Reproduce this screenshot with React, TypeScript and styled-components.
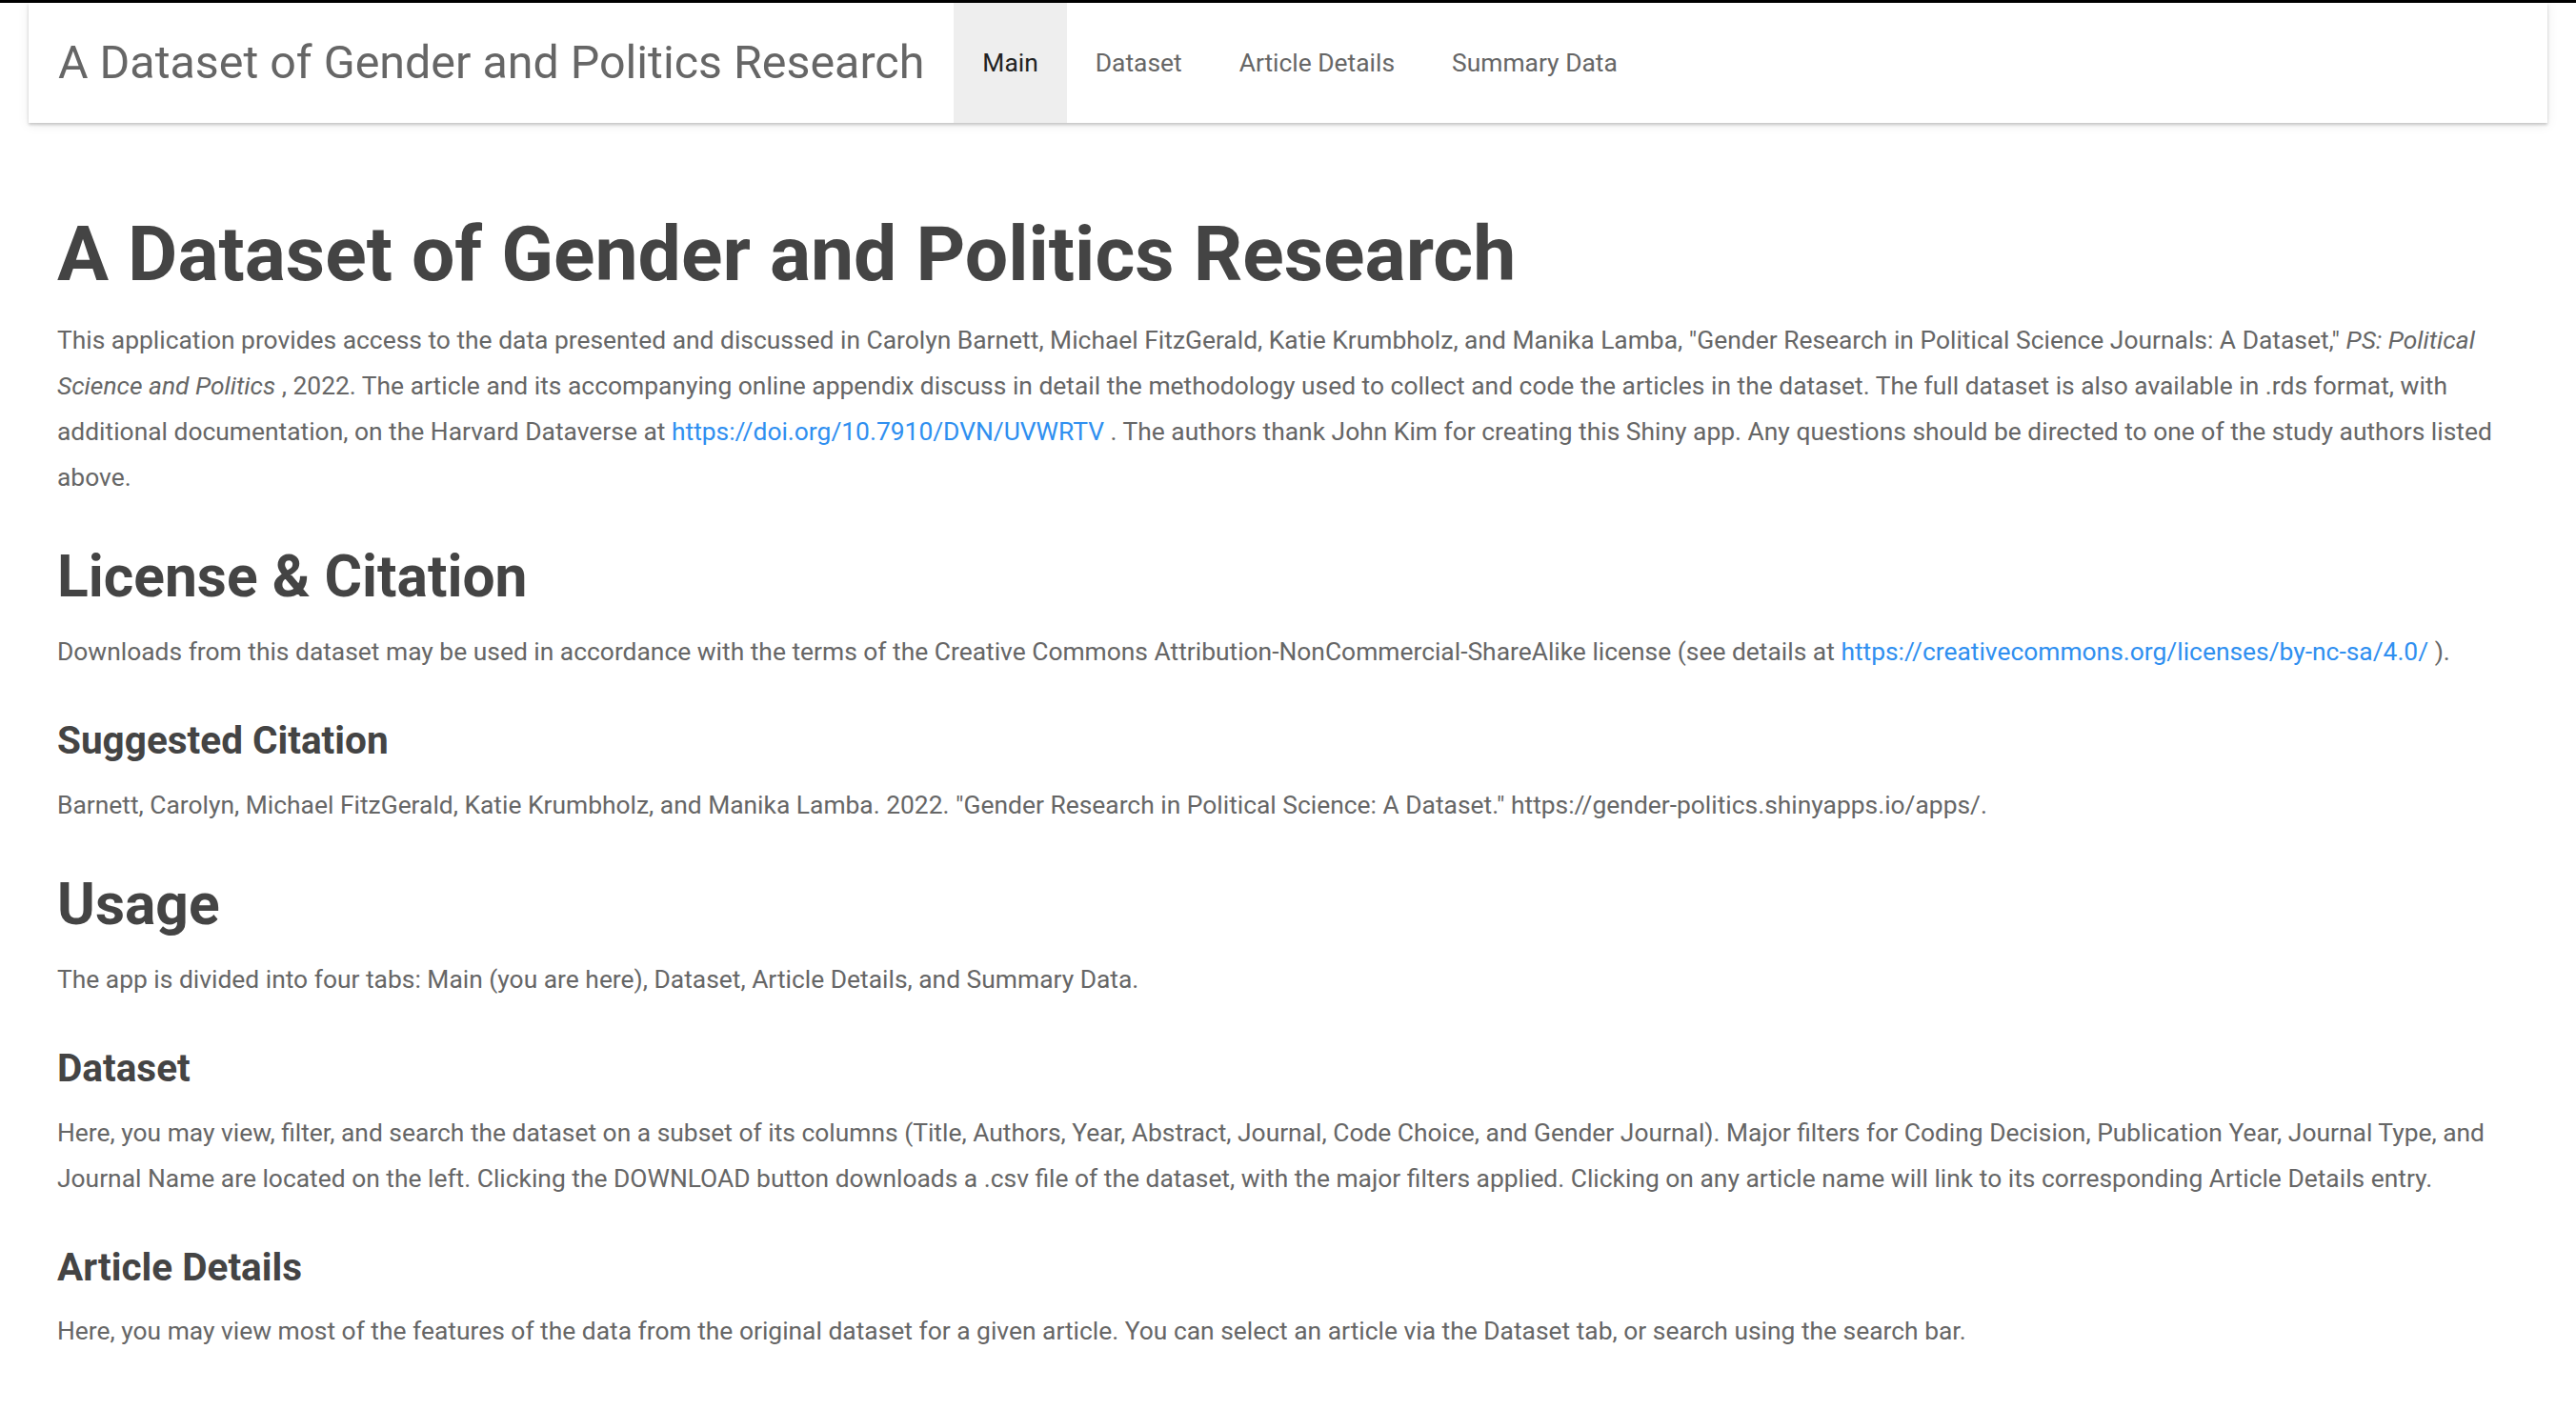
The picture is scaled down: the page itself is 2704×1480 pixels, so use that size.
import React from 'react';
import styled, { createGlobalStyle } from 'styled-components';

const GlobalStyle = createGlobalStyle`
    html, body {
        margin: 0;
        padding: 0;
        background: #ffffff;
    }
    body {
        font-family: Roboto, "Helvetica Neue", "Liberation Sans", Arial, sans-serif;
        -webkit-font-smoothing: antialiased;
    }
`;

const TopStrip = styled.div`
    height: 3px;
    background: #000000;
`;

const Navbar = styled.nav`
    display: flex;
    align-items: stretch;
    height: 126px;
    margin: 0 30px;
    background: #ffffff;
    box-shadow: 0 2px 3px rgba(0, 0, 0, 0.2), 0 2px 12px rgba(0, 0, 0, 0.08);
`;

const Brand = styled.a`
    padding: 0 31px 0 31px;
    font-size: 48.4px;
    line-height: 126px;
    color: #666666;
    text-decoration: none;
    white-space: nowrap;
`;

const NavList = styled.ul`
    display: flex;
    margin: 0;
    padding: 0;
    list-style: none;
`;

const NavItem = styled.li<{ $active?: boolean }>`
    padding: 0 30px;
    font-size: 26.4px;
    line-height: 126px;
    color: ${({ $active }) => ($active ? '#222222' : '#666666')};
    background: ${({ $active }) => ($active ? '#eeeeee' : 'transparent')};
    white-space: nowrap;
    cursor: pointer;
`;

const Content = styled.main`
    padding: 94px 60px 0;
    color: #666666;
    font-size: 26.4px;
    line-height: 48px;
`;

const Title = styled.h1`
    margin: 0 0 21px;
    font-size: 80.5px;
    line-height: 1.1;
    font-weight: 700;
    color: #444444;
`;

const Section = styled.h2`
    margin: 48px 0 21px;
    font-size: 60.5px;
    line-height: 1.1;
    font-weight: 700;
    color: #444444;
`;

const Subsection = styled.h3`
    margin: 47px 0 21px;
    font-size: 40.5px;
    line-height: 1.1;
    font-weight: 700;
    color: #444444;
`;

const Text = styled.p`
    margin: 0 0 20px;
`;

const Link = styled.a`
    color: #2f8ff0;
    text-decoration: none;
`;

const tabs = ['Main', 'Dataset', 'Article Details', 'Summary Data'];

export default function App() {
    return (
        <>
            <GlobalStyle />
            <TopStrip />
            <Navbar>
                <Brand>A Dataset of Gender and Politics Research</Brand>
                <NavList>
                    {tabs.map((tab) => (
                        <NavItem key={tab} $active={tab === 'Main'}>
                            {tab}
                        </NavItem>
                    ))}
                </NavList>
            </Navbar>
            <Content>
                <Title>A Dataset of Gender and Politics Research</Title>
                <Text>
                    This application provides access to the data presented and discussed in Carolyn Barnett, Michael
                    FitzGerald, Katie Krumbholz, and Manika Lamba, "Gender Research in Political Science Journals: A
                    Dataset," <em>PS: Political Science and Politics</em> , 2022. The article and its accompanying online
                    appendix discuss in detail the methodology used to collect and code the articles in the dataset. The
                    full dataset is also available in .rds format, with additional documentation, on the Harvard
                    Dataverse at <Link href="#">https://doi.org/10.7910/DVN/UVWRTV</Link> . The authors thank John Kim
                    for creating this Shiny app. Any questions should be directed to one of the study authors listed
                    above.
                </Text>

                <Section>License &amp; Citation</Section>
                <Text>
                    Downloads from this dataset may be used in accordance with the terms of the Creative Commons
                    Attribution-NonCommercial-ShareAlike license (see details at{' '}
                    <Link href="#">https://creativecommons.org/licenses/by-nc-sa/4.0/</Link> ).
                </Text>

                <Subsection>Suggested Citation</Subsection>
                <Text>
                    Barnett, Carolyn, Michael FitzGerald, Katie Krumbholz, and Manika Lamba. 2022. "Gender Research in
                    Political Science: A Dataset." https://gender-politics.shinyapps.io/apps/.
                </Text>

                <Section>Usage</Section>
                <Text>
                    The app is divided into four tabs: Main (you are here), Dataset, Article Details, and Summary Data.
                </Text>

                <Subsection>Dataset</Subsection>
                <Text>
                    Here, you may view, filter, and search the dataset on a subset of its columns (Title, Authors, Year,
                    Abstract, Journal, Code Choice, and Gender Journal). Major filters for Coding Decision, Publication
                    Year, Journal Type, and Journal Name are located on the left. Clicking the DOWNLOAD button downloads
                    a .csv file of the dataset, with the major filters applied. Clicking on any article name will link
                    to its corresponding Article Details entry.
                </Text>

                <Subsection>Article Details</Subsection>
                <Text>
                    Here, you may view most of the features of the data from the original dataset for a given article.
                    You can select an article via the Dataset tab, or search using the search bar.
                </Text>
            </Content>
        </>
    );
}
